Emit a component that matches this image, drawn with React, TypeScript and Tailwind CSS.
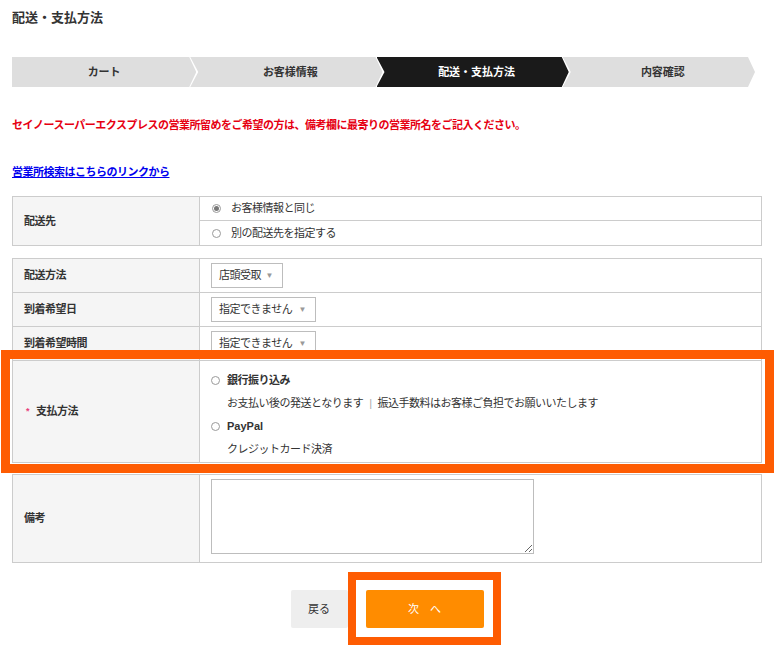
import React from 'react';

const font = { fontFamily: '"Liberation Sans", "Noto Sans CJK JP", sans-serif' };

const steps = [
  { label: 'カート', active: false },
  { label: 'お客様情報', active: false },
  { label: '配送・支払方法', active: true },
  { label: '内容確認', active: false },
];

const Radio: React.FC<{ checked?: boolean }> = ({ checked }) => (
  <span className="flex h-[9px] w-[9px] shrink-0 items-center justify-center rounded-full border border-[#9a9a9a] bg-white">
    {checked && <span className="h-[5px] w-[5px] rounded-full bg-[#777]" />}
  </span>
);

const Select: React.FC<{ value: string; width: string }> = ({ value, width }) => (
  <div className={`flex h-[25px] items-center justify-between border border-[#bdbdbd] bg-white pl-[7px] pr-[9px] ${width}`}>
    <span>{value}</span>
    <span className="text-[8px] text-[#999]">▼</span>
  </div>
);

const Label: React.FC<{ children: React.ReactNode; required?: boolean }> = ({ children, required }) => (
  <div className="flex w-[187px] shrink-0 items-center border-r border-[#cccccc] bg-[#f5f5f5] pl-[11px] font-bold">
    {required && <span className="ml-[2px] mr-[7px] text-[9px] text-[#e8407a]">*</span>}
    {children}
  </div>
);

export default function App() {
  return (
    <div style={font} className="min-h-[648px] w-[774px] bg-white px-[12px] pt-[10px] text-[11px] tracking-[-0.5px] text-[#333]">
      <h1 className="text-[13px] font-bold leading-[16px] tracking-normal">配送・支払方法</h1>

      {/* steps */}
      <ol className="mt-[31px] flex h-[30px] w-[743px] tracking-normal">
        {steps.map((s, i) => (
          <li
            key={s.label}
            className={`flex flex-1 items-center justify-center font-bold ${
              s.active ? 'bg-[#1a1a1a] text-white' : 'bg-[#dedede] text-[#333]'
            } ${
              i === 0
                ? '[clip-path:polygon(0_0,calc(100%_-_7px)_0,100%_50%,calc(100%_-_7px)_100%,0_100%)]'
                : '-ml-[6px] pl-[8px] [clip-path:polygon(0_0,calc(100%_-_7px)_0,100%_50%,calc(100%_-_7px)_100%,0_100%,8px_50%)]'
            }`}
          >
            {s.label}
          </li>
        ))}
      </ol>

      <p className="mt-[31px] font-bold leading-[14px] text-[#e60012]">
        セイノースーパーエクスプレスの営業所留めをご希望の方は、備考欄に最寄りの営業所名をご記入ください。
      </p>

      <p className="mt-[33px] leading-[14px]">
        <a href="#" className="font-bold text-[#0000ee] underline">営業所検索はこちらのリンクから</a>
      </p>

      {/* 配送先 */}
      <div className="mt-[17px] flex w-[750px] border border-[#cccccc]">
        <Label>配送先</Label>
        <div className="flex flex-1 flex-col">
          <div className="flex h-[24px] items-center gap-[10px] border-b border-[#cccccc] pl-[12px]">
            <Radio checked />
            <span>お客様情報と同じ</span>
          </div>
          <div className="flex h-[24px] items-center gap-[10px] pl-[12px]">
            <Radio />
            <span>別の配送先を指定する</span>
          </div>
        </div>
      </div>

      {/* 配送方法 〜 支払方法 */}
      <div className="mt-[12px] flex w-[750px] flex-col border border-[#cccccc]">
        <div className="flex h-[34px] border-b border-[#cccccc]">
          <Label>配送方法</Label>
          <div className="flex flex-1 items-center pl-[11px]">
            <Select value="店頭受取" width="w-[72px]" />
          </div>
        </div>
        <div className="flex h-[34px] border-b border-[#cccccc]">
          <Label>到着希望日</Label>
          <div className="flex flex-1 items-center pl-[11px]">
            <Select value="指定できません" width="w-[105px]" />
          </div>
        </div>
        <div className="flex h-[34px] border-b border-[#cccccc]">
          <Label>到着希望時間</Label>
          <div className="flex flex-1 items-center pl-[11px]">
            <Select value="指定できません" width="w-[105px]" />
          </div>
        </div>
        <div className="relative flex h-[101px]">
          <Label required>支払方法</Label>
          <div className="flex flex-1 flex-col pl-[11px] pt-[8px]">
            <div className="flex h-[23px] items-center gap-[7px]">
              <Radio />
              <span className="font-bold">銀行振り込み</span>
            </div>
            <div className="flex h-[23px] items-center pl-[16px]">
              お支払い後の発送となります<span className="mx-[6px] text-[#aaa]">|</span>振込手数料はお客様ご負担でお願いいたします
            </div>
            <div className="flex h-[23px] items-center gap-[7px]">
              <Radio />
              <span className="font-bold tracking-normal">PayPal</span>
            </div>
            <div className="flex h-[23px] items-center pl-[16px]">クレジットカード決済</div>
          </div>
          {/* annotation box */}
          <div className="pointer-events-none absolute -bottom-[11px] -left-[12px] -right-[13px] -top-[11px] border-[9px] border-[#fe5c02]" />
        </div>
      </div>

      {/* 備考 */}
      <div className="mt-[11px] flex h-[89px] w-[750px] border border-[#cccccc]">
        <Label>備考</Label>
        <div className="flex-1 pl-[11px] pt-[4px]">
          <textarea className="block h-[75px] w-[323px] border border-[#bdbdbd] bg-white" />
        </div>
      </div>

      {/* buttons */}
      <div className="mt-[27px] flex w-[750px] justify-center gap-[18px] tracking-normal">
        <button className="h-[38px] w-[57px] rounded-[2px] bg-[#eeeeee] text-[11px] text-[#333]">戻る</button>
        <div className="relative">
          <button className="h-[38px] w-[118px] rounded-[2px] bg-[#ff8c00] text-[11px] text-white">次　へ</button>
          <div className="pointer-events-none absolute -bottom-[17px] -left-[18px] -right-[17px] -top-[18px] border-[8px] border-[#fe5c02]" />
        </div>
      </div>
    </div>
  );
}
